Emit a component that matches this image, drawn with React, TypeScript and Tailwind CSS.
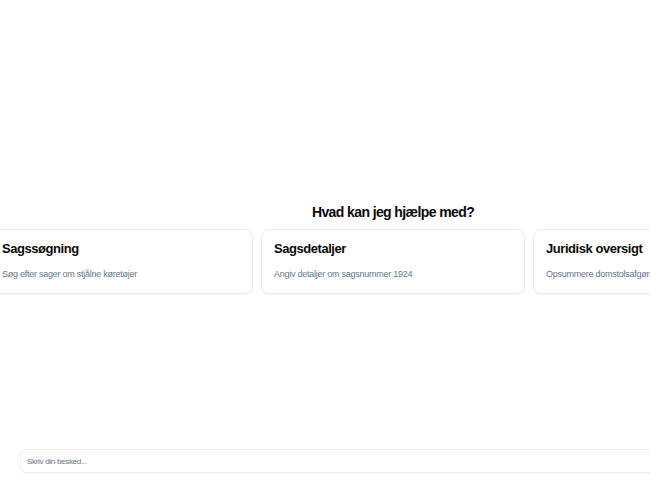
import React from "react";

const cards = [
  { title: "Sagssøgning", desc: "Søg efter sager om stjålne køretøjer" },
  { title: "Sagsdetaljer", desc: "Angiv detaljer om sagsnummer 1924" },
  { title: "Juridisk oversigt", desc: "Opsummere domstolsafgørelser i tyverisager" },
];

export default function App() {
  return (
    <div
      className="h-[500px] w-[650px] overflow-hidden bg-white"
      style={{ fontFamily: '"Liberation Sans", Arial, sans-serif' }}
    >
      <div className="flex h-full w-[786px] flex-col">
        <div className="flex flex-1 flex-col items-center pt-[203px]">
          <h1 className="text-[14px] font-bold leading-[18px] tracking-[-0.6px] text-[#0a0a0a]">
            Hvad kan jeg hjælpe med?
          </h1>
          <div className="mt-[8px] flex w-[808px] shrink-0 gap-2">
            {cards.map((c) => (
              <div
                key={c.title}
                className="h-[65px] w-[264px] shrink-0 overflow-hidden rounded-lg border border-[#ececec] bg-white px-3 pt-[11px] shadow-[0_1px_2px_rgba(0,0,0,0.04)]"
              >
                <div className="text-[13px] font-bold leading-[16px] tracking-[-0.45px] text-[#0a0a0a]">
                  {c.title}
                </div>
                <div className="mt-[11px] whitespace-nowrap text-[9px] leading-[12px] tracking-[-0.25px] text-[#6b7689]">
                  {c.desc}
                </div>
              </div>
            ))}
          </div>
        </div>
        <div className="px-5 pb-[27px]">
          <div className="flex h-[24px] items-center rounded-md border border-[#eef0f2] px-[6px] pt-[1px] shadow-[0_1px_2px_rgba(0,0,0,0.03)]">
            <span className="text-[8px] tracking-[-0.3px] text-[#64748b]">Skriv din besked...</span>
          </div>
        </div>
      </div>
    </div>
  );
}
